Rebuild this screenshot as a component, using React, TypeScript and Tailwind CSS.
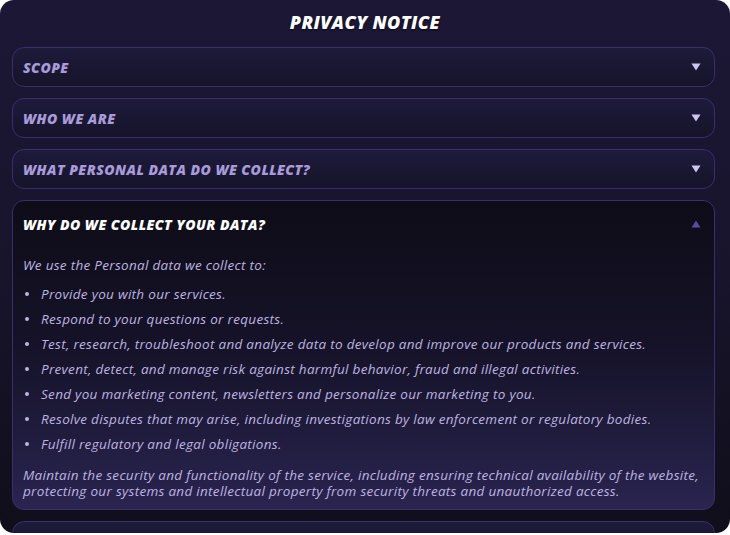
import { useState } from 'react';

const SECTIONS = [
    { id: 'scope', title: 'SCOPE' },
    { id: 'who', title: 'WHO WE ARE' },
    { id: 'what', title: 'WHAT PERSONAL DATA DO WE COLLECT?' },
    { id: 'why', title: 'WHY DO WE COLLECT YOUR DATA?' },
    { id: 'share', title: 'WITH WHOM DO WE SHARE YOUR PERSONAL DATA?' },
];

const REASONS = [
    'Provide you with our services.',
    'Respond to your questions or requests.',
    'Test, research, troubleshoot and analyze data to develop and improve our products and services.',
    'Prevent, detect, and manage risk against harmful behavior, fraud and illegal activities.',
    'Send you marketing content, newsletters and personalize our marketing to you.',
    'Resolve disputes that may arise, including investigations by law enforcement or regulatory bodies.',
    'Fulfill regulatory and legal obligations.',
];

const Caret = ({ open }: { open: boolean }) => (
    <svg width="10" height="8" viewBox="0 0 10 8" className={open ? 'text-[#5b4aa3]' : 'text-[#cdc5ee]'}>
        {open ? <path d="M5 0.5L9.5 7.5H0.5Z" fill="currentColor" /> : <path d="M0.5 0.5H9.5L5 7.5Z" fill="currentColor" />}
    </svg>
);

export default function App() {
    const [openId, setOpenId] = useState('why');
    const font = { fontFamily: '"Open Sans", "Noto Sans", sans-serif' };

    return (
        <div className="w-[730px] h-[535px] bg-white" style={font}>
            <div className="h-[533px] rounded-[14px] overflow-hidden bg-gradient-to-b from-[#1c1735] via-[#18142c] to-[#100e1a] flex flex-col pl-3 pr-[15px]">
                {/* Title */}
                <h1 className="shrink-0 h-[43px] flex items-center justify-center pt-[1px] pl-[3px] text-[18px] font-extrabold italic text-white tracking-[0.4px] [text-shadow:0_1px_2px_rgba(0,0,0,0.6)]">
                    PRIVACY NOTICE
                </h1>

                {/* Accordion */}
                <div className="flex flex-col gap-[11px] pt-[4px]">
                    {SECTIONS.map(s => {
                        const open = openId === s.id;
                        return (
                            <div
                                key={s.id}
                                className={`rounded-[12px] border border-[#3a2f6c] shrink-0 ${open
                                    ? 'bg-gradient-to-b from-[#0e0c17] via-[#16132a] to-[#2a2450]'
                                    : 'bg-gradient-to-b from-[#1e1a3b] to-[#16132a]'}`}
                            >
                                <button
                                    onClick={() => setOpenId(open ? '' : s.id)}
                                    className={`w-full flex items-center justify-between pl-[10px] pr-[13px] text-left ${open ? 'h-[45px] pt-[1px]' : 'h-[38px]'}`}
                                >
                                    <span className={`text-[14px] font-extrabold italic tracking-[0.45px] ${open ? 'text-white' : 'text-[#a89bd9]'}`}>
                                        {s.title}
                                    </span>
                                    <Caret open={open} />
                                </button>

                                {open && (
                                    <div className="pl-[10px] pr-[10px] pb-[10px] pt-[9px] text-[13.5px] italic tracking-[0.3px] text-[#bdb4e0]">
                                        <p className="leading-[20px]">We use the Personal data we collect to:</p>
                                        <ul className="mt-[9px] flex flex-col gap-[5px]">
                                            {REASONS.map(r => (
                                                <li key={r} className="flex items-center leading-[20px]">
                                                    <span className="w-[18px] shrink-0 pl-[2px]">
                                                        <span className="block w-[4px] h-[4px] rounded-full bg-[#bdb4e0]" />
                                                    </span>
                                                    <span>{r}</span>
                                                </li>
                                            ))}
                                        </ul>
                                        <p className="mt-[13px] leading-[16px]">
                                            Maintain the security and functionality of the service, including ensuring technical availability of the website, protecting our systems and intellectual property from security threats and unauthorized access.
                                        </p>
                                    </div>
                                )}
                            </div>
                        );
                    })}
                </div>
            </div>
        </div>
    );
}
